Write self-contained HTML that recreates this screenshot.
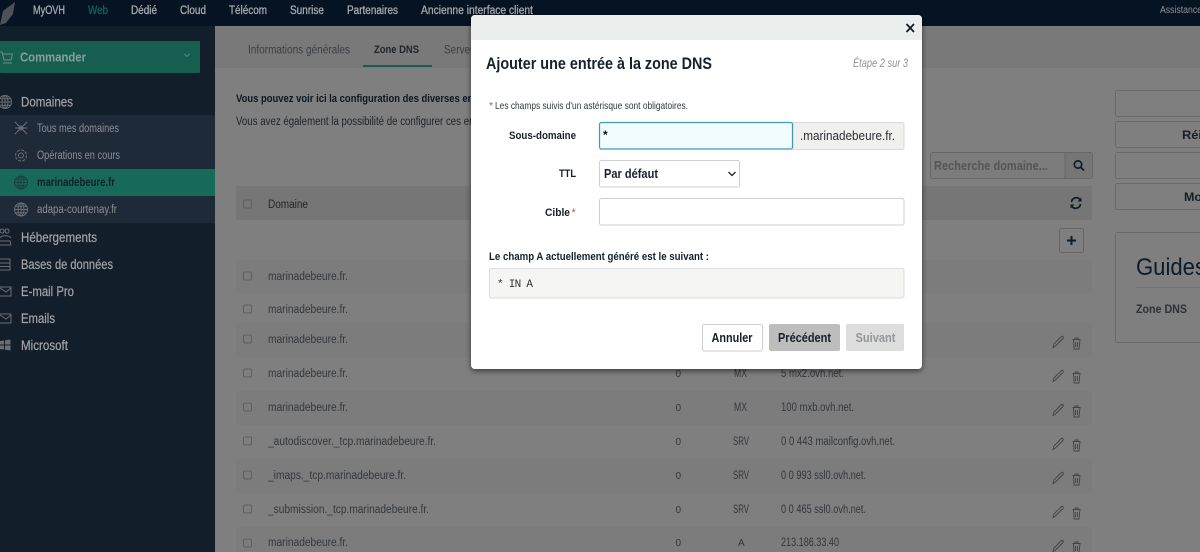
<!DOCTYPE html>
<html lang="fr"><head><meta charset="utf-8"><title>Zone DNS</title>
<style>
html,body{margin:0;padding:0;background:#7f7f7f;width:1200px;height:552px;overflow:hidden}
svg{display:block;filter:blur(.3px)}
text{font-family:"Liberation Sans",sans-serif;font-size:11px}
.nav{fill:#a7aaae;font-size:11.5px;stroke:#a7aaae;stroke-width:.3px}
.sb{fill:#a2a5a9;font-size:13.5px;stroke:#a2a5a9;stroke-width:.2px}
.sub{fill:#8b8f95;font-size:11.5px}
.td{fill:#33373c;font-size:11.5px}
.n{fill:#33373c;font-size:10px}
.lb{fill:#15202c;font-size:11px;font-weight:bold}
.ic{fill:none;stroke:#6a6e74;stroke-width:1}
.tic{fill:none;stroke:#404347;stroke-width:.9}
.cb{fill:none;stroke:#5f5f5f;stroke-width:1}
</style></head><body>
<svg xmlns="http://www.w3.org/2000/svg" width="1200" height="552" viewBox="0 0 1200 552">
<defs>
<g id="globe"><circle cx="0" cy="0" r="6.5"/><ellipse cx="0" cy="0" rx="3" ry="6.5"/><path d="M0-6.5V6.5M-6.5 0H6.5M-5.6-3.2H5.6M-5.6 3.2H5.6"/></g>
<g id="act"><path class="tic" d="M1053 347.500l1-3.500 7.500-7.500c1-1 2.500 1 1.500 2l-7.500 7.500z"/><path class="tic" d="M1072.500 339.500h8M1075 339.500v-1.500h3v1.500M1073.500 339.500l.5 9.500h5l1-9.500M1075.500 342v5M1077.500 342v5"/></g>
<filter id="sh" x="-5%" y="-5%" width="110%" height="110%"><feDropShadow dx="0" dy="2" stdDeviation="3" flood-color="#000" flood-opacity=".55"/></filter>
</defs>

<!-- page background -->
<rect width="1200" height="552" fill="#7f7f7f"/>
<rect x="215" y="26" width="985" height="42" fill="#797979"/>

<!-- top bar -->
<rect width="1200" height="26" fill="#061322"/>
<path d="M0 25L3 11L15 2L13 14L6 23z" fill="#4b5159"/>
<text x="33" y="14" class="nav" textLength="32" lengthAdjust="spacingAndGlyphs">MyOVH</text>
<text x="88" y="14" class="nav" style="fill:#0f6454;stroke:#0f6454" textLength="20" lengthAdjust="spacingAndGlyphs">Web</text>
<text x="131" y="14" class="nav" textLength="26" lengthAdjust="spacingAndGlyphs">Dédié</text>
<text x="180" y="14" class="nav" textLength="26" lengthAdjust="spacingAndGlyphs">Cloud</text>
<text x="229" y="14" class="nav" textLength="38" lengthAdjust="spacingAndGlyphs">Télécom</text>
<text x="290" y="14" class="nav" textLength="34" lengthAdjust="spacingAndGlyphs">Sunrise</text>
<text x="347" y="14" class="nav" textLength="51" lengthAdjust="spacingAndGlyphs">Partenaires</text>
<text x="421" y="14" class="nav" textLength="112" lengthAdjust="spacingAndGlyphs">Ancienne interface client</text>
<text x="1160" y="13" style="fill:#8e9298;font-size:10px" textLength="42" lengthAdjust="spacingAndGlyphs">Assistance</text>

<!-- sidebar -->
<rect x="0" y="26" width="215" height="526" fill="#131e2b"/>
<rect x="0" y="41" width="200" height="32" rx="1" fill="#155e50"/>
<path d="M0 52h2l2 8h7l1.500-6H3M3 63h9" fill="none" stroke="#6f8e88" stroke-width="1"/>
<text x="20" y="61.500" style="fill:#8a9d9b;font-size:13px;font-weight:bold" textLength="66" lengthAdjust="spacingAndGlyphs">Commander</text>
<path d="M184.500 54l2.500 2.500 2.500-2.500" fill="none" stroke="#4d8d7f" stroke-width="1"/>

<use href="#globe" x="5" y="102" class="ic"/>
<text x="21" y="106.500" class="sb" textLength="52" lengthAdjust="spacingAndGlyphs">Domaines</text>
<rect x="0" y="115" width="215" height="108" fill="#1f2a38"/>
<rect x="0" y="169" width="215" height="27" fill="#176a59"/>

<path class="ic" d="M15 122l12 12M27 122l-12 12M15 128h3l3 0h3l3 0"/>
<circle cx="21" cy="128" r="2" class="ic"/>
<text x="37" y="132" class="sub" textLength="82" lengthAdjust="spacingAndGlyphs">Tous mes domaines</text>
<circle cx="21" cy="155.500" r="2.500" class="ic"/>
<circle cx="21" cy="155.500" r="5.500" class="ic" stroke-dasharray="3 1.300"/>
<text x="37" y="159" class="sub" textLength="83" lengthAdjust="spacingAndGlyphs">Opérations en cours</text>
<use href="#globe" x="21" y="182.500" style="fill:none;stroke:#1f3e42;stroke-width:1"/>
<text x="37" y="186" class="sub" style="fill:#10202c;font-weight:bold" textLength="78" lengthAdjust="spacingAndGlyphs">marinadebeure.fr</text>
<use href="#globe" x="21" y="209.500" class="ic"/>
<text x="37" y="213" class="sub" textLength="80" lengthAdjust="spacingAndGlyphs">adapa-courtenay.fr</text>

<path class="ic" d="M0 241h10l1 4H0M2 233a2 2 0 1 1 .1 0M7 233a2 2 0 1 1 .1 0M0 238c1-3 9-3 11 0"/>
<text x="21" y="242" class="sb" textLength="76" lengthAdjust="spacingAndGlyphs">Hébergements</text>
<path class="ic" d="M0 259h10v11H0M0 263h10M0 266.500h10"/>
<text x="21" y="269" class="sb" textLength="92" lengthAdjust="spacingAndGlyphs">Bases de données</text>
<path class="ic" d="M0 287h11v9H0M0 288l6 4 5-4"/>
<text x="21" y="296" class="sb" textLength="53" lengthAdjust="spacingAndGlyphs">E-mail Pro</text>
<path class="ic" d="M0 314h11v9H0M0 315l6 4 5-4"/>
<text x="21" y="323" class="sb" textLength="34" lengthAdjust="spacingAndGlyphs">Emails</text>
<path d="M0 341l4-.5v4H0zM5 340.300l5.500-.8v5H5zM0 345.500h4v4l-4-.5zM5 345.500h5.500v5L5 349.700z" fill="#6a6e74"/>
<text x="21" y="350" class="sb" textLength="47" lengthAdjust="spacingAndGlyphs">Microsoft</text>

<!-- tabs -->
<text x="248" y="53.500" style="fill:#3a3e42;font-size:11.500px" textLength="102" lengthAdjust="spacingAndGlyphs">Informations générales</text>
<text x="374" y="53" style="fill:#20242a;font-size:11px;font-weight:bold" textLength="45" lengthAdjust="spacingAndGlyphs">Zone DNS</text>
<text x="444" y="53.500" style="fill:#3a3e42;font-size:11.500px" textLength="40" lengthAdjust="spacingAndGlyphs">Serveurs</text>
<rect x="363" y="65" width="69" height="2" fill="#165e50"/>

<!-- intro -->
<text x="236" y="102" class="lb" style="fill:#0c1722" textLength="260" lengthAdjust="spacingAndGlyphs">Vous pouvez voir ici la configuration des diverses entrées</text>
<text x="236" y="125" style="fill:#1e2329;font-size:11.500px" textLength="260" lengthAdjust="spacingAndGlyphs">Vous avez également la possibilité de configurer ces entrées</text>

<!-- search -->
<rect x="930.500" y="152.500" width="162" height="26" rx="2" fill="#7c7c7c" stroke="#676767"/>
<rect x="1065" y="153" width="27" height="25" fill="#767676"/>
<line x1="1065" y1="153" x2="1065" y2="178" stroke="#676767"/>
<text x="934" y="170" style="fill:#555;font-size:13px;font-weight:bold" textLength="114" lengthAdjust="spacingAndGlyphs">Recherche domaine...</text>
<circle cx="1078" cy="164.500" r="3.700" fill="none" stroke="#0d1b2a" stroke-width="1.600"/>
<path d="M1081 167.500l3 3" stroke="#0d1b2a" stroke-width="1.800"/>

<!-- table -->
<rect x="236" y="186" width="856" height="34" fill="#767676"/>
<rect x="236" y="260" width="856" height="33" fill="#7c7c7c"/>
<rect x="236" y="323" width="856" height="34" fill="#7c7c7c"/>
<rect x="236" y="391" width="856" height="34" fill="#7c7c7c"/>
<rect x="236" y="459" width="856" height="34" fill="#7c7c7c"/>
<rect x="236" y="527" width="856" height="25" fill="#7c7c7c"/>

<rect x="243.500" y="200" width="8" height="8" rx="1.500" class="cb"/>
<text x="268" y="208" style="fill:#22262b;font-size:11.500px" textLength="40" lengthAdjust="spacingAndGlyphs">Domaine</text>
<path d="M1071.500 202a4.800 4.800 0 0 1 8.500-2.500M1080.500 204a4.800 4.800 0 0 1-8.500 2.500" fill="none" stroke="#0d1b2a" stroke-width="1.700"/>
<path d="M1081.500 197.500v4h-4zM1070.500 208.500v-4h4z" fill="#0d1b2a"/>
<rect x="1059.500" y="228.500" width="24" height="24" rx="2" fill="#7f7f7f" stroke="#666"/>
<path d="M1071.500 236v9M1067 240.500h9" stroke="#0d1b2a" stroke-width="2"/>

<!-- rows: domain -->
<g>
<rect x="243.500" y="272" width="8" height="8" rx="1.500" class="cb"/>
<rect x="243.500" y="305" width="8" height="8" rx="1.500" class="cb"/>
<rect x="243.500" y="335" width="8" height="8" rx="1.500" class="cb"/>
<rect x="243.500" y="369" width="8" height="8" rx="1.500" class="cb"/>
<rect x="243.500" y="403" width="8" height="8" rx="1.500" class="cb"/>
<rect x="243.500" y="437" width="8" height="8" rx="1.500" class="cb"/>
<rect x="243.500" y="471" width="8" height="8" rx="1.500" class="cb"/>
<rect x="243.500" y="505" width="8" height="8" rx="1.500" class="cb"/>
<rect x="243.500" y="539" width="8" height="8" rx="1.500" class="cb"/>
</g>
<text x="268" y="280" class="td" textLength="80" lengthAdjust="spacingAndGlyphs">marinadebeure.fr.</text>
<text x="268" y="313" class="td" textLength="80" lengthAdjust="spacingAndGlyphs">marinadebeure.fr.</text>
<text x="268" y="343" class="td" textLength="80" lengthAdjust="spacingAndGlyphs">marinadebeure.fr.</text>
<text x="268" y="377" class="td" textLength="80" lengthAdjust="spacingAndGlyphs">marinadebeure.fr.</text>
<text x="268" y="411" class="td" textLength="80" lengthAdjust="spacingAndGlyphs">marinadebeure.fr.</text>
<text x="268" y="445" class="td" textLength="168" lengthAdjust="spacingAndGlyphs">_autodiscover._tcp.marinadebeure.fr.</text>
<text x="268" y="479" class="td" textLength="138" lengthAdjust="spacingAndGlyphs">_imaps._tcp.marinadebeure.fr.</text>
<text x="268" y="513" class="td" textLength="161" lengthAdjust="spacingAndGlyphs">_submission._tcp.marinadebeure.fr.</text>
<text x="268" y="546" class="td" textLength="80" lengthAdjust="spacingAndGlyphs">marinadebeure.fr.</text>

<text x="675.500" y="377" class="n">0</text><text x="734" y="377" class="td" textLength="13" lengthAdjust="spacingAndGlyphs">MX</text><text x="781" y="377" class="td" textLength="63" lengthAdjust="spacingAndGlyphs">5 mx2.ovh.net.</text>
<text x="675.500" y="411" class="n">0</text><text x="734" y="411" class="td" textLength="13" lengthAdjust="spacingAndGlyphs">MX</text><text x="781" y="411" class="td" textLength="73" lengthAdjust="spacingAndGlyphs">100 mxb.ovh.net.</text>
<text x="675.500" y="445" class="n">0</text><text x="733" y="445" class="td" textLength="16" lengthAdjust="spacingAndGlyphs">SRV</text><text x="781" y="445" class="td" textLength="114" lengthAdjust="spacingAndGlyphs">0 0 443 mailconfig.ovh.net.</text>
<text x="675.500" y="479" class="n">0</text><text x="733" y="479" class="td" textLength="16" lengthAdjust="spacingAndGlyphs">SRV</text><text x="781" y="479" class="td" textLength="85" lengthAdjust="spacingAndGlyphs">0 0 993 ssl0.ovh.net.</text>
<text x="675.500" y="513" class="n">0</text><text x="733" y="513" class="td" textLength="16" lengthAdjust="spacingAndGlyphs">SRV</text><text x="781" y="513" class="td" textLength="85" lengthAdjust="spacingAndGlyphs">0 0 465 ssl0.ovh.net.</text>
<text x="675.500" y="546" class="n">0</text><text x="738" y="546" class="n">A</text><text x="781" y="546" class="td" textLength="58" lengthAdjust="spacingAndGlyphs">213.186.33.40</text>

<use href="#act"/><use href="#act" y="34"/><use href="#act" y="68"/><use href="#act" y="102"/><use href="#act" y="136"/><use href="#act" y="170"/><use href="#act" y="204"/>

<!-- right column -->
<g fill="#7f7f7f" stroke="#6a6a6a">
<rect x="1115.500" y="90.500" width="100" height="26" rx="2"/>
<rect x="1115.500" y="121.500" width="100" height="26" rx="2"/>
<rect x="1115.500" y="152.500" width="100" height="26" rx="2"/>
<rect x="1115.500" y="183.500" width="100" height="26" rx="2"/>
<rect x="1115.500" y="232.500" width="100" height="110" rx="2"/>
</g>
<text x="1182" y="139" style="fill:#151e29;font-size:12px;font-weight:bold" textLength="20" lengthAdjust="spacingAndGlyphs">Réi</text>
<text x="1184" y="201" style="fill:#151e29;font-size:12px;font-weight:bold" textLength="18" lengthAdjust="spacingAndGlyphs">Mo</text>
<text x="1136" y="275" style="fill:#0d1b2a;font-size:24px" textLength="70" lengthAdjust="spacingAndGlyphs">Guides</text>
<line x1="1136" y1="287.500" x2="1200" y2="287.500" stroke="#727272"/>
<text x="1136" y="313" style="fill:#2d3237;font-size:12px;font-weight:bold" textLength="51" lengthAdjust="spacingAndGlyphs">Zone DNS</text>

<!-- modal -->
<rect x="471" y="15" width="451" height="354" rx="4" fill="#fff" filter="url(#sh)"/>
<path d="M471 40V19a4 4 0 0 1 4-4h443a4 4 0 0 1 4 4v21z" fill="#eceeed"/>
<path d="M906.500 24l7.500 8M914 24l-7.500 8" stroke="#101820" stroke-width="1.700"/>
<text x="486" y="69" style="fill:#17212d;font-size:17px;font-weight:bold" textLength="226" lengthAdjust="spacingAndGlyphs">Ajouter une entrée à la zone DNS</text>
<text x="853" y="67" style="fill:#8c949b;font-size:11.500px;font-style:italic" textLength="55" lengthAdjust="spacingAndGlyphs">Étape 2 sur 3</text>
<text x="489" y="109" style="fill:#a8604f;font-size:10.500px">*</text>
<text x="495" y="109" style="fill:#2c3742;font-size:10.500px" textLength="193" lengthAdjust="spacingAndGlyphs">Les champs suivis d'un astérisque sont obligatoires.</text>

<text x="509" y="139" class="lb" textLength="67" lengthAdjust="spacingAndGlyphs">Sous-domaine</text>
<path d="M793 122.500h109a2 2 0 0 1 2 2v23a2 2 0 0 1-2 2h-109z" fill="#f0f0ef" stroke="#d9d9d9"/>
<rect x="599.500" y="122.500" width="193" height="26.500" rx="2" fill="#f2fbfd" stroke="#3e9ab8" stroke-width="1.200"/>
<text x="603" y="139" style="fill:#111;font-size:12px;font-weight:bold">*</text>
<text x="800" y="140" style="fill:#2b2f33;font-size:13px" textLength="95" lengthAdjust="spacingAndGlyphs">.marinadebeure.fr.</text>

<text x="559" y="177" class="lb" textLength="17" lengthAdjust="spacingAndGlyphs">TTL</text>
<rect x="599.500" y="160.500" width="140" height="26.500" rx="2" fill="#fff" stroke="#cfcfcf"/>
<text x="604" y="178" style="fill:#17212d;font-size:13px;font-weight:bold" textLength="54" lengthAdjust="spacingAndGlyphs">Par défaut</text>
<path d="M728.500 172l3.500 3.500 3.500-3.500" fill="none" stroke="#222" stroke-width="1.300"/>

<text x="545" y="216" class="lb" textLength="25" lengthAdjust="spacingAndGlyphs">Cible</text>
<text x="571.500" y="216" style="fill:#a8604f;font-size:11px">*</text>
<rect x="599.500" y="198.500" width="304.500" height="26.500" rx="2" fill="#fff" stroke="#cfcfcf"/>

<text x="489" y="260" class="lb" textLength="220" lengthAdjust="spacingAndGlyphs">Le champ A actuellement généré est le suivant :</text>
<rect x="489.500" y="268.500" width="414.500" height="29.500" rx="2" fill="#f5f5f4" stroke="#dcdcdc"/>
<text x="497" y="287" style="fill:#333;font-family:'Liberation Mono',monospace;font-size:11px" textLength="36" lengthAdjust="spacing">* IN A</text>

<rect x="702.500" y="324.500" width="60" height="26.500" rx="2" fill="#fff" stroke="#cfcfcf"/>
<text x="711.500" y="342" style="fill:#14202c;font-size:12.500px;font-weight:bold" textLength="41" lengthAdjust="spacingAndGlyphs">Annuler</text>
<rect x="769" y="324" width="71" height="27" rx="2" fill="#bcbdbc"/>
<text x="778" y="342" style="fill:#14202c;font-size:12.500px;font-weight:bold" textLength="53" lengthAdjust="spacingAndGlyphs">Précédent</text>
<rect x="846" y="324" width="58" height="27" rx="2" fill="#dcdddc"/>
<text x="855.500" y="342" style="fill:#939799;font-size:12.500px;font-weight:bold" textLength="40" lengthAdjust="spacingAndGlyphs">Suivant</text>
</svg>
</body></html>
